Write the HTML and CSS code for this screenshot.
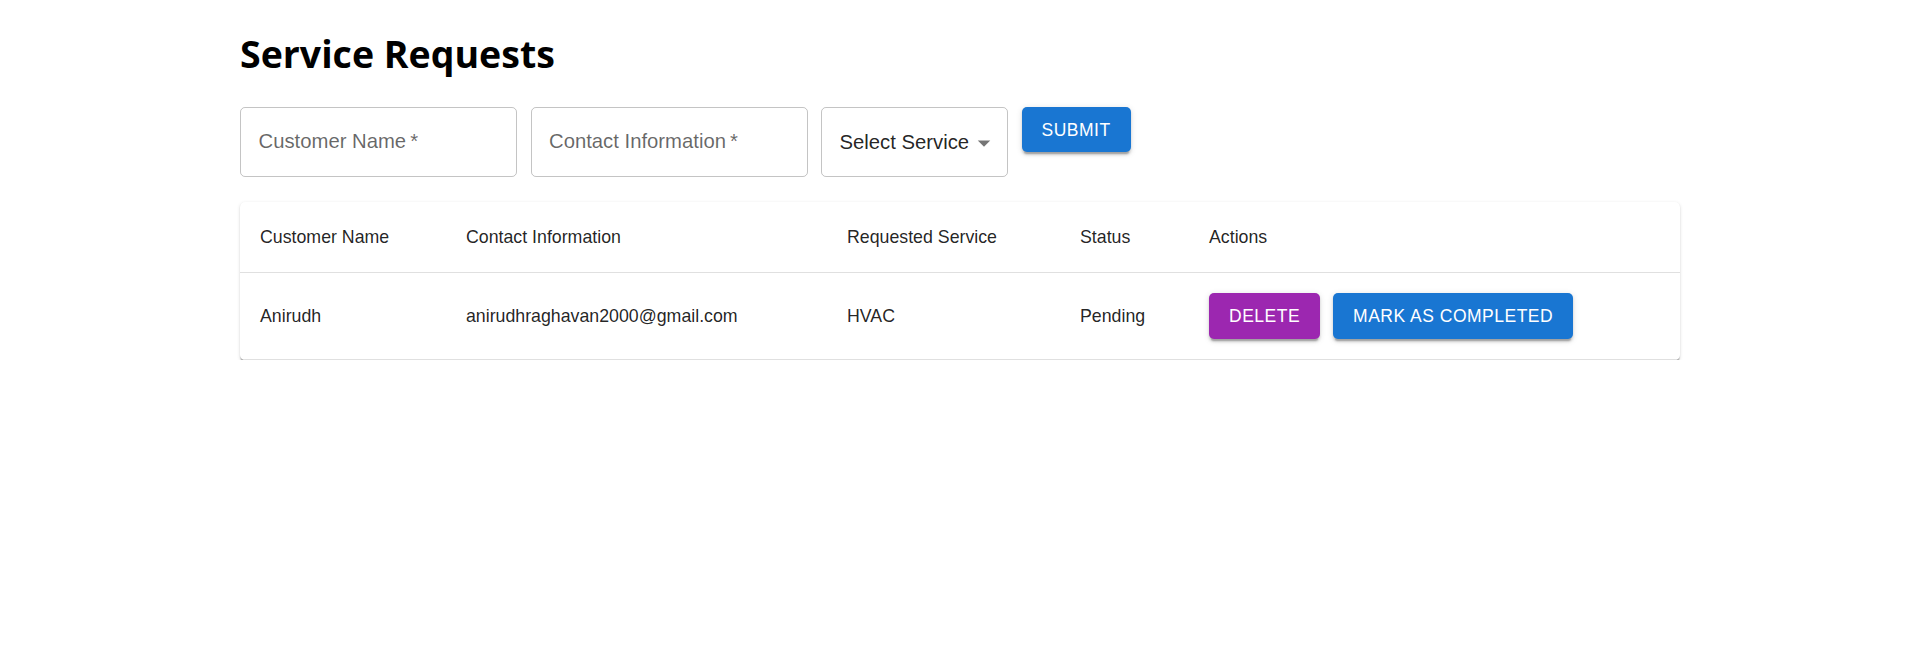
FILE: index.html
```html
<!DOCTYPE html>
<html lang="en">
<head>
<meta charset="utf-8">
<title>Service Requests</title>
<link rel="stylesheet" href="styles.css">
</head>
<body>
<div class="container">
  <h1 class="title">Service Requests</h1>
  <form class="form-row">
    <div class="field field-text"><span class="label">Customer Name&thinsp;*</span></div>
    <div class="field field-text"><span class="label">Contact Information&thinsp;*</span></div>
    <div class="field field-select">
      <span class="select-value">Select Service</span>
      <svg class="select-icon" viewBox="0 0 24 24" width="30" height="30" aria-hidden="true"><path d="M7 10l5 5 5-5z"></path></svg>
    </div>
    <button type="button" class="btn btn-primary">SUBMIT</button>
  </form>
  <div class="card">
    <table class="table">
      <colgroup>
        <col class="c1"><col class="c2"><col class="c3"><col class="c4"><col class="c5">
      </colgroup>
      <thead>
        <tr>
          <th>Customer Name</th>
          <th>Contact Information</th>
          <th>Requested Service</th>
          <th>Status</th>
          <th>Actions</th>
        </tr>
      </thead>
      <tbody>
        <tr>
          <td>Anirudh</td>
          <td>anirudhraghavan2000@gmail.com</td>
          <td>HVAC</td>
          <td>Pending</td>
          <td>
            <div class="actions">
              <button type="button" class="btn btn-secondary">DELETE</button>
              <button type="button" class="btn btn-primary">MARK AS COMPLETED</button>
            </div>
          </td>
        </tr>
      </tbody>
    </table>
  </div>
</div>
</body>
</html>
```

FILE: styles.css
```css
* { box-sizing: border-box; }

html, body {
  margin: 0;
  padding: 0;
  background: #ffffff;
}

body {
  font-family: "Liberation Sans", Arial, sans-serif;
  color: rgba(0, 0, 0, 0.87);
}

.container {
  width: 1440px;
  margin: 0 auto;
  padding-top: 34px;
}

.title {
  font-family: "Open Sans", "Noto Sans", sans-serif;
  font-weight: 700;
  font-size: 37.5px;
  line-height: 40px;
  margin: 0 0 33px 0;
  color: #000;
}

.form-row {
  display: flex;
  align-items: flex-start;
  gap: 13.5px;
  margin: 0;
}

.field {
  height: 70px;
  border: 1px solid rgba(0, 0, 0, 0.23);
  border-radius: 5px;
  font-size: 20.3px;
  line-height: 28.75px;
}

.field-text {
  width: 277px;
  padding: 19px 17.5px 0 17.5px;
}

.label {
  color: rgba(0, 0, 0, 0.6);
  white-space: nowrap;
}

.field-select {
  width: 187px;
  display: flex;
  align-items: center;
  padding: 1px 8px 0 17.5px;
}

.select-value {
  flex: 1;
  color: rgba(0, 0, 0, 0.87);
  white-space: nowrap;
}

.select-icon {
  fill: rgba(0, 0, 0, 0.54);
  flex: none;
  display: block;
}

.btn {
  border: 0;
  border-radius: 5px;
  font-family: "Liberation Sans", Arial, sans-serif;
  font-size: 17.5px;
  font-weight: 400;
  line-height: 30px;
  letter-spacing: 0.5px;
  padding: 7.5px 20px;
  color: #ffffff;
  cursor: pointer;
  box-shadow: 0px 3.75px 1.25px -2.5px rgba(0, 0, 0, 0.2),
              0px 2.5px 2.5px 0px rgba(0, 0, 0, 0.14),
              0px 1.25px 6.25px 0px rgba(0, 0, 0, 0.12);
}

.btn-primary { background: #1976d2; }
.btn-secondary { background: #9c27b0; }

.card {
  margin-top: 25px;
  background: #ffffff;
  border-radius: 5px;
  box-shadow: 0px 2.5px 1.25px -1.25px rgba(0, 0, 0, 0.2),
              0px 1.25px 1.25px 0px rgba(0, 0, 0, 0.14),
              0px 1.25px 3.75px 0px rgba(0, 0, 0, 0.12);
  overflow: hidden;
}

.table {
  width: 100%;
  border-collapse: collapse;
  table-layout: fixed;
  font-size: 17.75px;
  line-height: 30px;
}

.c1 { width: 206px; }
.c2 { width: 381px; }
.c3 { width: 233px; }
.c4 { width: 129px; }
.c5 { width: 491px; }

.table th,
.table td {
  text-align: left;
  padding: 20px;
  border-bottom: 1px solid rgb(224, 224, 224);
  color: rgba(0, 0, 0, 0.87);
  vertical-align: middle;
  white-space: nowrap;
}

.table th {
  font-weight: 400;
}

.actions {
  display: flex;
  gap: 13px;
}

.actions .btn {
  font-size: 17.5px;
  padding: 7.75px 20px;
}
```
